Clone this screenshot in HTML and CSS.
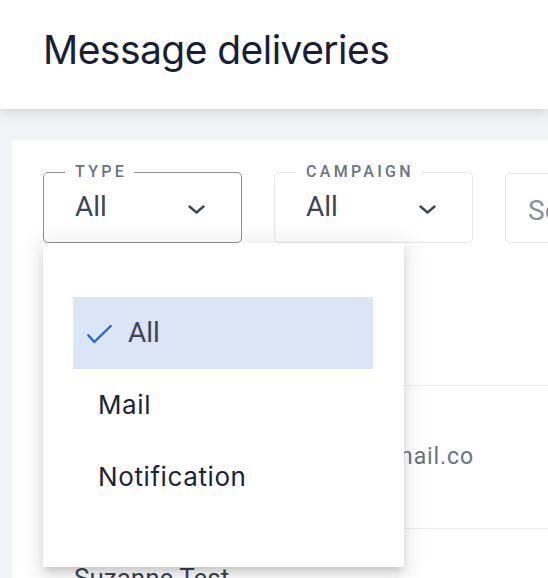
FILE: index.html
```html
<!DOCTYPE html>
<html lang="en">
<head>
<meta charset="utf-8">
<title>Message deliveries</title>
<link rel="stylesheet" href="styles.css">
</head>
<body>
<header class="topbar">
  <h1 class="title">Message deliveries</h1>
</header>
<main class="content">
  <section class="card">
    <div class="filters">
      <div class="filter-wrap">
        <fieldset class="field field--focused">
          <legend class="field-label">TYPE</legend>
          <div class="field-value">
            <span class="value-text">All</span>
            <svg class="chevron" width="17" height="9" viewBox="0 0 17 9"><polyline points="1.5,1.5 8.5,7.5 15.5,1.5" fill="none" stroke="#3e4556" stroke-width="2.4" stroke-linecap="round" stroke-linejoin="round"/></svg>
          </div>
        </fieldset>
        <ul class="menu">
          <li class="menu-item menu-item--selected">
            <svg class="check" width="26" height="22" viewBox="0 0 26 22"><polyline points="2.3,12.3 8.3,19 24.7,3" fill="none" stroke="#2566d8" stroke-width="2.4" stroke-linecap="round" stroke-linejoin="round"/></svg>
            <span class="menu-text menu-text--selected">All</span>
          </li>
          <li class="menu-item"><span class="menu-text">Mail</span></li>
          <li class="menu-item"><span class="menu-text">Notification</span></li>
        </ul>
      </div>
      <fieldset class="field">
        <legend class="field-label">CAMPAIGN</legend>
        <div class="field-value">
          <span class="value-text">All</span>
          <svg class="chevron" width="17" height="9" viewBox="0 0 17 9"><polyline points="1.5,1.5 8.5,7.5 15.5,1.5" fill="none" stroke="#3e4556" stroke-width="2.4" stroke-linecap="round" stroke-linejoin="round"/></svg>
        </div>
      </fieldset>
      <div class="field field--search">
        <span class="placeholder">Search</span>
      </div>
    </div>
    <div class="table">
      <div class="row row--head"></div>
      <div class="row row--data">
        <span class="cell-name">Suzanne Test</span>
        <span class="cell-email">suzanne.test@gmail.co</span>
      </div>
      <div class="row row--next">
        <span class="cell-name">Suzanne Test</span>
      </div>
    </div>
  </section>
</main>
</body>
</html>
```
FILE: styles.css
```css
* { box-sizing: border-box; }

html, body {
  margin: 0;
  padding: 0;
  height: 578px;
  overflow: hidden;
}

body {
  background: #f2f3f7;
  font-family: "Roboto", "Liberation Sans", sans-serif;
  color: #3e4556;
}

.topbar {
  position: relative;
  z-index: 2;
  height: 109px;
  background: #ffffff;
  box-shadow: 0 3px 12px rgba(0, 0, 0, 0.13);
  padding: 26px 0 0 43px;
}

.title {
  margin: 0;
  font-family: "Inter", sans-serif;
  font-weight: 400;
  font-size: 39px;
  line-height: 47px;
  color: #172036;
  letter-spacing: -0.55px;
}

.content {
  padding: 31px 0 0 12px;
}

.card {
  background: #ffffff;
  padding: 24px 0 0 31px;
  height: 460px;
}

.filters {
  display: flex;
  align-items: flex-end;
  gap: 32px;
}

.filter-wrap {
  position: relative;
  flex: 0 0 auto;
}

.field {
  flex: 0 0 auto;
  width: 199px;
  margin: 0;
  padding: 0;
  border: 1.5px solid #e3e5ea;
  border-radius: 5px;
  min-width: 0;
}

.field--focused {
  border-color: #8f8f8f;
}

.field-label {
  margin-left: 21px;
  padding: 0 7px 0 10px;
  font-family: "Roboto", sans-serif;
  font-size: 16px;
  line-height: 16px;
  font-weight: 500;
  letter-spacing: 3.3px;
  color: #6c7283;
}

.field-value {
  display: flex;
  align-items: center;
  justify-content: space-between;
  padding: 11px 36px 19px 31px;
}

.value-text {
  font-size: 28px;
  line-height: 32px;
  color: #3e4556;
}

.chevron {
  display: block;
  margin-top: 5px;
}

.field--search {
  height: 70px;
  padding: 0 0 0 22px;
  display: flex;
  align-items: center;
}

.placeholder {
  font-size: 28px;
  line-height: 32px;
  color: #8a909d;
  padding-top: 6px;
}

.menu {
  position: absolute;
  z-index: 5;
  top: 100%;
  left: 0;
  width: 361px;
  margin: 0;
  padding: 54px 31px 55px 30px;
  list-style: none;
  background: #ffffff;
  box-shadow: 0 5px 5px -3px rgba(0, 0, 0, 0.12), 0 8px 10px 1px rgba(0, 0, 0, 0.08), 0 3px 20px 5px rgba(0, 0, 0, 0.08);
}

.menu-item {
  display: flex;
  align-items: center;
  height: 71.5px;
  padding-left: 25px;
}

.menu-item--selected {
  background: #dae5f6;
  padding-left: 13px;
}

.check {
  display: block;
  margin-right: 16px;
  margin-top: 2px;
}

.menu-text {
  font-family: "Inter", sans-serif;
  font-size: 26px;
  line-height: 32px;
  letter-spacing: 0.6px;
  color: #1c2438;
  padding-top: 2px;
}

.menu-text--selected {
  font-family: "Roboto", sans-serif;
  font-size: 28px;
  letter-spacing: 0;
  color: #3e4556;
  padding-top: 0;
}

.row {
  border-bottom: 1px solid #eceef3;
}

.row--head {
  height: 143px;
}

.row--data {
  height: 143px;
  display: flex;
  align-items: center;
}

.row--next {
  padding-top: 34px;
  border-bottom: 0;
}

.cell-name {
  display: block;
  width: 331px;
  padding-left: 31px;
  font-size: 26px;
  line-height: 30px;
  color: #3e4556;
  white-space: nowrap;
}

.cell-email {
  display: flex;
  justify-content: flex-end;
  width: 100px;
  white-space: nowrap;
  font-size: 23px;
  line-height: 26px;
  letter-spacing: 0.9px;
  color: #6b7385;
}
```
